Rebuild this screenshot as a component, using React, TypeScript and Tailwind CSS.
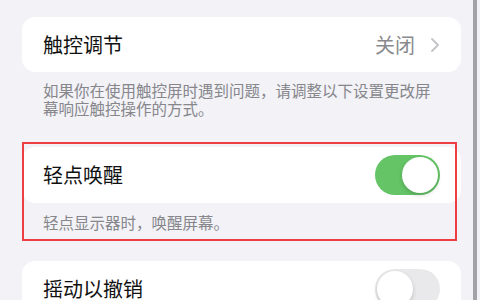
import React from "react";

const font = { fontFamily: '"Noto Sans CJK SC", "Noto Sans", sans-serif' };

function Toggle({ on }: { on: boolean }) {
  return (
    <div
      className={
        "relative w-[65px] h-[40px] rounded-full flex items-center px-[2px] " +
        (on ? "bg-[#65c466] justify-end" : "bg-[#e9e9eb] justify-start")
      }
    >
      <div className="w-[36px] h-[36px] rounded-full bg-white shadow-[0_2px_4px_rgba(0,0,0,0.18)]" />
    </div>
  );
}

export default function App() {
  return (
    <div className="w-[480px] h-[300px] overflow-hidden bg-[#f2f2f7] flex" style={font}>
      <div className="flex-1 pl-[22px] pr-[12px] pt-[17px]">
        <div className="h-[55px] rounded-[13px] bg-white flex items-center justify-between pl-[21px] pr-[22px]">
          <span className="text-[20px] text-[#111] leading-none">触控调节</span>
          <div className="flex items-center gap-[16px]">
            <span className="text-[20px] text-[#8a8a8e] leading-none">关闭</span>
            <svg width="8" height="14" viewBox="0 0 8 14" fill="none">
              <path d="M1 1l6 6-6 6" stroke="#c4c4c7" strokeWidth="1.8" strokeLinecap="round" strokeLinejoin="round" />
            </svg>
          </div>
        </div>
        <p className="mt-[9px] px-[21px] text-[15.5px] leading-[18px] text-[#86868b] whitespace-nowrap">
          如果你在使用触控屏时遇到问题，请调整以下设置更改屏
          <br />
          幕响应触控操作的方式。
        </p>

        <div className="relative mt-[30px]">
          <div className="h-[56px] rounded-[13px] bg-white flex items-center justify-between pl-[21px] pr-[21px]">
            <span className="text-[20px] text-[#111] leading-none">轻点唤醒</span>
            <Toggle on={true} />
          </div>
          <p className="mt-[10px] px-[21px] text-[15.5px] leading-[18px] text-[#86868b] whitespace-nowrap">
            轻点显示器时，唤醒屏幕。
          </p>
          <div className="absolute top-[-5px] left-0 right-[4px] bottom-[-10px] border-2 border-[#ef3e42] pointer-events-none" />
        </div>

        <div className="mt-[30px] h-[56px] rounded-[13px] bg-white flex items-center justify-between pl-[21px] pr-[21px]">
          <span className="text-[20px] text-[#111] leading-none">摇动以撤销</span>
          <Toggle on={false} />
        </div>
      </div>
      <div className="w-[4px] h-full bg-[#a3a3a6]" />
      <div className="w-[3px] h-full" />
    </div>
  );
}
